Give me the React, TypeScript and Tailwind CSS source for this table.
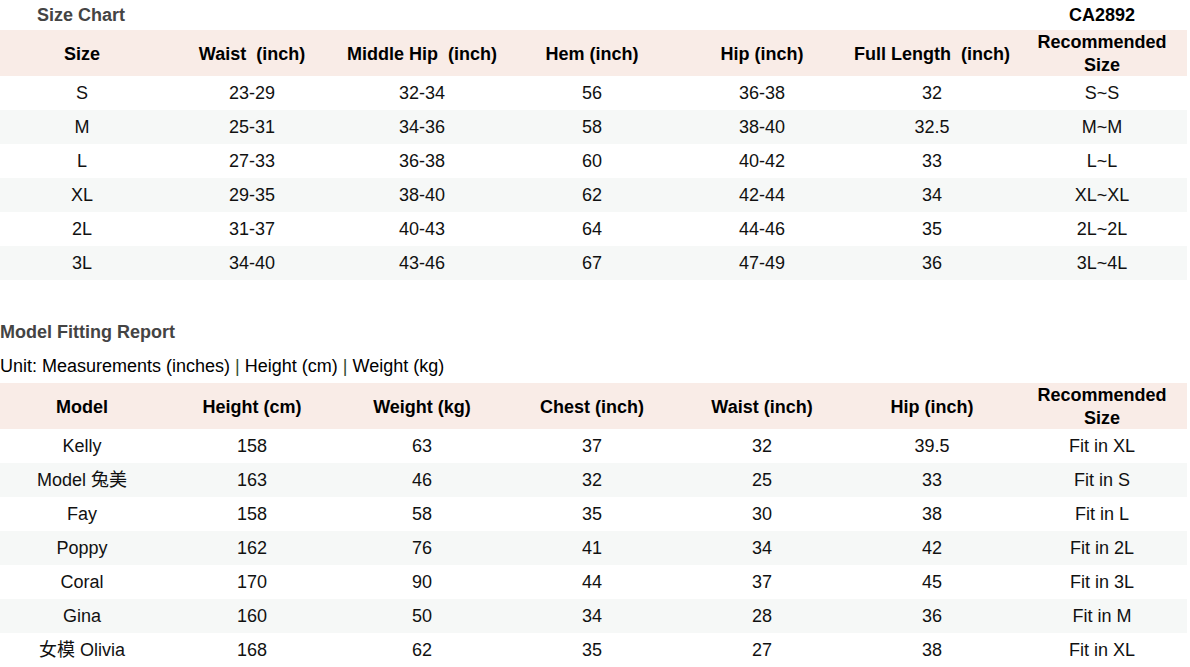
const sizeHead = ["Size", "Waist  (inch)", "Middle Hip  (inch)", "Hem (inch)", "Hip (inch)", "Full Length  (inch)", "Recommended Size"];
const sizeRows = [
  ["S", "23-29", "32-34", "56", "36-38", "32", "S~S"],
  ["M", "25-31", "34-36", "58", "38-40", "32.5", "M~M"],
  ["L", "27-33", "36-38", "60", "40-42", "33", "L~L"],
  ["XL", "29-35", "38-40", "62", "42-44", "34", "XL~XL"],
  ["2L", "31-37", "40-43", "64", "44-46", "35", "2L~2L"],
  ["3L", "34-40", "43-46", "67", "47-49", "36", "3L~4L"],
];

const modelHead = ["Model", "Height (cm)", "Weight (kg)", "Chest (inch)", "Waist (inch)", "Hip (inch)", "Recommended Size"];
const modelRows = [
  ["Kelly", "158", "63", "37", "32", "39.5", "Fit in XL"],
  ["Model 兔美", "163", "46", "32", "25", "33", "Fit in S"],
  ["Fay", "158", "58", "35", "30", "38", "Fit in L"],
  ["Poppy", "162", "76", "41", "34", "42", "Fit in 2L"],
  ["Coral", "170", "90", "44", "37", "45", "Fit in 3L"],
  ["Gina", "160", "50", "34", "28", "36", "Fit in M"],
  ["女模 Olivia", "168", "62", "35", "27", "38", "Fit in XL"],
];

function Table({ head, rows }: { head: string[]; rows: string[][] }) {
  return (
    <div className="w-[1187px]">
      <div className="h-[46px] bg-[#f9ece7] font-bold text-black">
        <div className="grid grid-cols-[repeat(7,170px)] -ml-[3px] h-full pt-px">
          {head.map((h) => (
            <div key={h} className="flex items-center justify-center text-center leading-[23px] whitespace-pre-wrap">
              {h === "Recommended Size" ? <span>Recommended<br />Size</span> : h}
            </div>
          ))}
        </div>
      </div>
      {rows.map((r, i) => (
        <div key={i} className={`h-[34px] ${i % 2 ? "bg-[#f6f8f7]" : "bg-white"}`}>
          <div className="grid grid-cols-[repeat(7,170px)] -ml-[3px] h-full pt-px">
            {r.map((c, j) => (
              <div key={j} className="flex items-center justify-center">{c}</div>
            ))}
          </div>
        </div>
      ))}
    </div>
  );
}

export default function App() {
  return (
    <div className="w-[1190px] h-[667px] overflow-hidden bg-white text-[18px] text-[#111] font-['Liberation_Sans','Noto_Sans_CJK_SC',sans-serif]">
      <div className="flex items-center justify-between h-[30px] pl-[37px] pr-[55px]">
        <span className="font-bold text-[#444]">Size Chart</span>
        <span className="font-bold text-black">CA2892</span>
      </div>
      <Table head={sizeHead} rows={sizeRows} />

      <div className="mt-[35px] h-[34px] flex items-center font-bold text-[#444]">Model Fitting Report</div>
      <div className="h-[34px] flex items-center text-black">
        Unit: Measurements (inches) <span className="mx-[5px] text-[#2f4a2f]">|</span> Height (cm)
        <span className="mx-[5px] text-[#2f4a2f]">|</span> Weight (kg)
      </div>
      <Table head={modelHead} rows={modelRows} />
    </div>
  );
}
